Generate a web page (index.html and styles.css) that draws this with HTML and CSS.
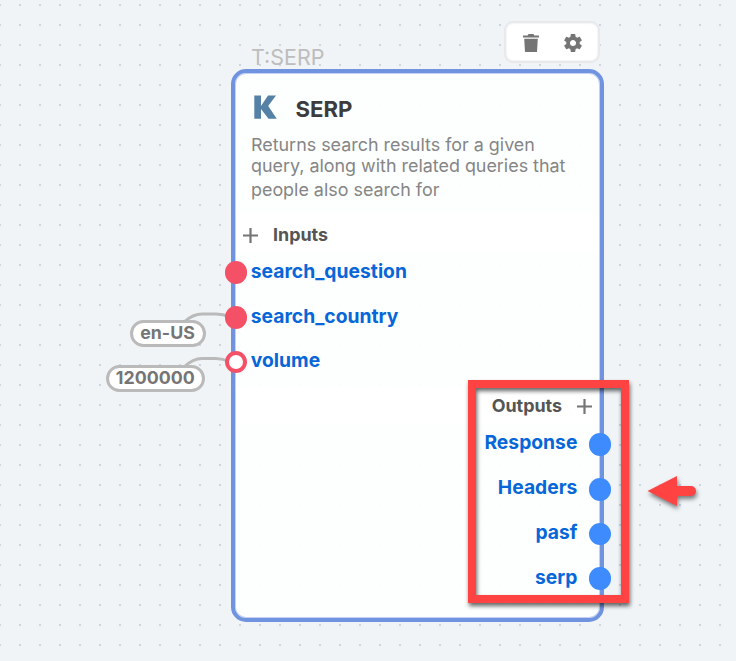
FILE: index.html
```html
<!DOCTYPE html>
<html lang="en">
<head>
<meta charset="utf-8">
<title>SERP</title>
<link rel="stylesheet" href="styles.css">
</head>
<body>
<main class="canvas">
  <div class="node-tag">T:SERP</div>
  <div class="toolbar">
    <svg width="16" height="18" viewBox="0 0 16 18"><path d="M0 1.4h4.6L5.500 0h5l.9 1.400H16v2.200H0zM1.200 4.800h13.600L14 18H2z"/></svg>
    <svg width="18" height="18" viewBox="2.400 2.400 19.200 19.200"><path d="M19.14 12.94c.04-.3.06-.61.06-.94 0-.32-.02-.64-.07-.94l2.03-1.58c.18-.14.23-.41.12-.61l-1.920-3.320c-.12-.22-.37-.29-.59-.22l-2.390.96c-.5-.38-1.030-.7-1.620-.94l-.36-2.540c-.04-.24-.24-.41-.48-.41h-3.840c-.24 0-.43.17-.47.41l-.36 2.540c-.59.24-1.130.57-1.620.94l-2.390-.96c-.22-.08-.47 0-.59.22L2.740 8.870c-.12.21-.08.47.12.61l2.030 1.580c-.05.3-.09.63-.09.94s.02.64.07.94l-2.030 1.580c-.18.14-.23.41-.12.61l1.920 3.320c.12.22.37.29.59.22l2.390-.96c.5.38 1.030.7 1.620.94l.36 2.540c.05.24.24.41.48.41h3.840c.24 0 .44-.17.47-.41l.36-2.540c.59-.24 1.130-.56 1.620-.94l2.390.96c.22.08.47 0 .59-.22l1.920-3.320c.12-.22.07-.47-.12-.61l-2.010-1.580zM12 15.300c-1.820 0-3.300-1.480-3.300-3.300s1.480-3.300 3.300-3.300 3.300 1.480 3.300 3.300-1.480 3.300-3.300 3.300z"/></svg>
  </div>
  <svg class="wires" width="60" height="70" viewBox="0 0 60 70"><path d="M3 21Q12 13 21 13H35Q42 13 49 16M3 66Q12 57.500 21 57.500H35Q42 57.500 49 61"/></svg>
  <div class="value value-country">en-US</div>
  <div class="value value-volume">1200000</div>
  <section class="node">
    <header class="node-head">
      <div class="node-title">
        <svg width="24" height="24" viewBox="0 0 24 24"><path d="M.3.500H7V11L14 .500H22L14.200 11 22.800 23.700H14.500L7 14V23.700H.3z"/></svg>
        <h1>SERP</h1>
      </div>
      <p class="description"><span>Returns search results for a given</span><span>query, along with related queries that</span><span>people also search for</span></p>
    </header>
    <div class="section-head"><svg class="plus" width="15" height="15" viewBox="0 0 15 15"><path d="M0 7.500H15M7.500 0V15"/></svg><span>Inputs</span></div>
    <div class="ports">
      <div class="port"><i class="pin"></i><span>search_question</span></div>
      <div class="port"><i class="pin"></i><span>search_country</span></div>
      <div class="port"><i class="pin open"></i><span>volume</span></div>
    </div>
    <div class="section-head outputs"><span>Outputs</span><svg class="plus" width="15" height="15" viewBox="0 0 15 15"><path d="M0 7.500H15M7.500 0V15"/></svg></div>
    <div class="ports outputs">
      <div class="port"><span>Response</span><i class="pin"></i></div>
      <div class="port"><span>Headers</span><i class="pin"></i></div>
      <div class="port"><span>pasf</span><i class="pin"></i></div>
      <div class="port"><span>serp</span><i class="pin"></i></div>
    </div>
  </section>
  <div class="highlight"></div>
  <svg class="arrow" width="60" height="44" viewBox="0 0 60 44"><path d="M7.500 21L37 6V16H51a5 5 0 0 1 0 10H37V36z"/></svg>
</main>
</body>
</html>
```
FILE: styles.css
```css
* { box-sizing: border-box; }
body { margin: 0; font-family: Inter, sans-serif; }
svg { display: block; flex: none; }
.canvas {
  position: relative;
  width: 736px;
  height: 661px;
  overflow: hidden;
  background: conic-gradient(from 90deg at 18px 18px, #ccd5df 90deg, #f0f4f7 0) 1px 6px / 20px 20px;
}
.node-tag {
  position: absolute;
  left: 251px;
  top: 43px;
  font-size: 21.5px;
  line-height: 28px;
  color: #bdbdbd;
}
.toolbar {
  position: absolute;
  left: 504px;
  top: 21px;
  width: 96px;
  height: 42px;
  display: flex;
  align-items: center;
  gap: 25px;
  padding: 2px 0 0 17px;
  background: #fff;
  border: 2px solid #e8e9eb;
  border-radius: 9px;
  box-shadow: inset 0 0 2px #ddd;
  fill: #757575;
}
.wires {
  position: absolute;
  left: 181px;
  top: 301px;
  fill: none;
  stroke: #bababa;
  stroke-width: 3;
}
.value {
  position: absolute;
  height: 27px;
  border: 3px solid #bababa;
  border-radius: 14px;
  background: #fff;
  color: #757575;
  font-size: 17.8px;
  font-weight: 700;
  line-height: 20px;
  text-align: center;
}
.value-country { left: 129.5px; top: 319.5px; width: 76px; }
.value-volume { left: 105.5px; top: 364.5px; width: 99.5px; }
.node {
  position: absolute;
  left: 231px;
  top: 69px;
  width: 373px;
  height: 553px;
  border: 4px solid #7093e0;
  border-radius: 15px;
  background: rgba(254, 255, 255, .93);
  box-shadow: inset 0 0 0 1px #c4d1f2;
}
.node-head { height: 141px; padding: 22px 15px 0 16px; }
.node-title { display: flex; gap: 17.5px; padding-left: 3px; fill: #5681a7; }
h1 { margin: 0; font-size: 22.2px; font-weight: 700; line-height: 28px; color: #3c3c3c; }
.description { margin: 11px 0 0; font-size: 17.9px; color: #858585; }
.description span { display: block; height: 21px; line-height: 21px; white-space: nowrap; }
.description span:last-child { margin-top: 3px; }
.section-head {
  display: flex;
  align-items: center;
  gap: 15px;
  height: 39px;
  margin: 0 1px -2.7px;
  padding: 3px 0 0 7px;
  background: #fff;
  font-size: 17.9px;
  font-weight: 700;
  color: #555;
}
.section-head span { margin-top: -2px; }
.plus { fill: none; stroke: #757575; stroke-width: 2.2; }
.section-head.outputs { justify-content: flex-end; margin-top: 1.7px; padding: 1px 7px 0 0; }
.port {
  position: relative;
  display: flex;
  align-items: center;
  gap: 3.5px;
  height: 44.7px;
  margin-left: -10.3px;
  color: #0766d8;
  font-size: 19.3px;
  font-weight: 700;
  line-height: 24px;
}
.port span { margin-top: -4px; }
.port:nth-child(2) span { margin-top: -3px; }
.pin { width: 22.6px; height: 22.6px; flex: none; border-radius: 50%; background: #f45166; }
.pin.open { background: #fff; border: 4.5px solid #f45166; }
.outputs .port { justify-content: flex-end; margin: 0 -11.3px 0 0; gap: 11.3px; }
.outputs .port span { margin-top: -5px; }
.outputs .port:last-child span { margin-top: -3.5px; }
.outputs .pin { background: #3d8bfd; }
.highlight {
  position: absolute;
  left: 468px;
  top: 380px;
  width: 161px;
  height: 223px;
  border: 8px solid #ff4343;
  filter: drop-shadow(1px 3px 2px rgba(0, 0, 0, .6));
}
.arrow {
  position: absolute;
  left: 640px;
  top: 470px;
  fill: #ff4343;
  filter: drop-shadow(1px 3px 2px rgba(0, 0, 0, .5));
}
```
